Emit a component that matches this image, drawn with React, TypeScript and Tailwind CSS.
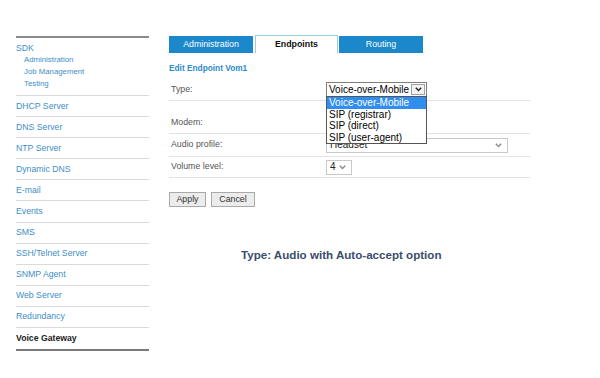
const sdkSub = ["Administration", "Job Management", "Testing"];

const menu = [
  "DHCP Server",
  "DNS Server",
  "NTP Server",
  "Dynamic DNS",
  "E-mail",
  "Events",
  "SMS",
  "SSH/Telnet Server",
  "SNMP Agent",
  "Web Server",
  "Redundancy",
];

const typeOptions = ["Voice-over-Mobile", "SIP (registrar)", "SIP (direct)", "SIP (user-agent)"];

function Chevron({ className = "" }: { className?: string }) {
  return (
    <svg width="7" height="5" viewBox="0 0 7 5" className={className}>
      <path d="M0.8 0.8 L3.5 3.6 L6.2 0.8" fill="none" stroke="currentColor" strokeWidth="1.4" />
    </svg>
  );
}

function Sidebar() {
  return (
    <div className="ml-[16px] mt-[36px] w-[133px] shrink-0">
      {/* SDK group */}
      <div className="border-t-2 border-b border-t-[#8a8a8a] border-b-[#dadada] pt-[4px] pb-[5px]">
        <div className="text-[8.7px] leading-[12px] text-[#3d8ec9]">SDK</div>
        {sdkSub.map((s) => (
          <div key={s} className="pl-[8px] text-[7.8px] leading-[12px] text-[#3d8ec9]">
            {s}
          </div>
        ))}
      </div>

      {menu.map((m) => (
        <div
          key={m}
          className="flex h-[21.1px] items-center border-b border-[#dadada] text-[8.7px] text-[#3d8ec9]"
        >
          {m}
        </div>
      ))}

      <div className="flex h-[23px] items-center border-b-2 border-[#7a7a7a] text-[8.7px] font-bold text-[#222]">
        Voice Gateway
      </div>
    </div>
  );
}

function Tabs() {
  return (
    <div className="mt-[35px] flex items-end text-[8.8px]">
      <div className="flex h-[17px] w-[84px] items-center justify-center bg-[#1b88cb] text-white">
        Administration
      </div>
      <div className="ml-[2px] flex h-[18px] w-[83px] items-center justify-center border border-b-0 border-[#9fcbe6] bg-white font-bold text-[#111]">
        Endpoints
      </div>
      <div className="ml-[1px] flex h-[17px] w-[84px] items-center justify-center bg-[#1b88cb] text-white">
        Routing
      </div>
    </div>
  );
}

function TypeSelect() {
  return (
    <div className="relative">
      <div className="flex h-[15px] w-[101px] items-center border border-[#7d7d7d] bg-white">
        <span className="flex-1 pl-[2px] text-[10px] leading-none text-black">Voice-over-Mobile</span>
        <span className="mr-[1px] flex h-[11px] w-[14px] items-center justify-center border border-[#a0a0a0] bg-[#f2f2f2] text-[#222]">
          <Chevron />
        </span>
      </div>
      {/* open option list */}
      <div className="absolute left-0 top-[14px] z-10 w-[101px] border border-[#555] bg-white">
        {typeOptions.map((o, i) => (
          <div
            key={o}
            className={`h-[11.6px] pl-[2px] text-[10px] leading-[11.6px] ${
              i === 0 ? "bg-[#2f8ef0] text-white" : "text-black"
            }`}
          >
            {o}
          </div>
        ))}
      </div>
    </div>
  );
}

function PlainSelect({ value, width }: { value: string; width: string }) {
  return (
    <div className={`flex h-[15px] items-center border border-[#c9c9c9] bg-white ${width}`}>
      <span className="flex-1 pl-[3px] text-[10px] leading-none text-[#222]">{value}</span>
      <Chevron className="mr-[5px] text-[#888]" />
    </div>
  );
}

function EndpointForm() {
  return (
    <div className="w-[361px]">
      <div className="mt-[9px] text-[8.3px] font-bold leading-[12px] text-[#2e8bc9]">
        Edit Endpoint Vom1
      </div>

      <div className="mt-[5px] text-[8.8px] text-[#555]">
        <div className="flex h-[22px] items-center border-b border-[#e2e2e2]">
          <span className="w-[157px] pl-[2px]">Type:</span>
          <TypeSelect />
        </div>

        <div className="flex h-[33px] items-end border-b border-[#e2e2e2] pb-[5px]">
          <span className="w-[157px] pl-[2px] leading-[12px]">Modem:</span>
        </div>

        <div className="flex h-[23px] items-center border-b border-[#e2e2e2]">
          <span className="w-[157px] pl-[2px]">Audio profile:</span>
          <PlainSelect value="Headset" width="w-[182px]" />
        </div>

        <div className="flex h-[21px] items-center border-b border-[#e2e2e2]">
          <span className="w-[157px] pl-[2px]">Volume level:</span>
          <PlainSelect value="4" width="w-[26px]" />
        </div>
      </div>

      <div className="mt-[14px] flex gap-[5px] text-[8.8px] text-[#333]">
        <button className="h-[15px] w-[37px] border border-[#a9a9a9] bg-[#ececec]">Apply</button>
        <button className="h-[15px] w-[44px] border border-[#a9a9a9] bg-[#ececec]">Cancel</button>
      </div>

      <div className="mt-[41px] pl-[72px] text-[11.6px] font-bold leading-[14px] text-[#3a4d6c]">
        Type: Audio with Auto-accept option
      </div>
    </div>
  );
}

export default function App() {
  return (
    <div className="flex h-[378px] w-[600px] bg-white font-['Liberation_Sans',Arial,sans-serif]">
      <Sidebar />
      <div className="ml-[20px]">
        <Tabs />
        <EndpointForm />
      </div>
    </div>
  );
}
